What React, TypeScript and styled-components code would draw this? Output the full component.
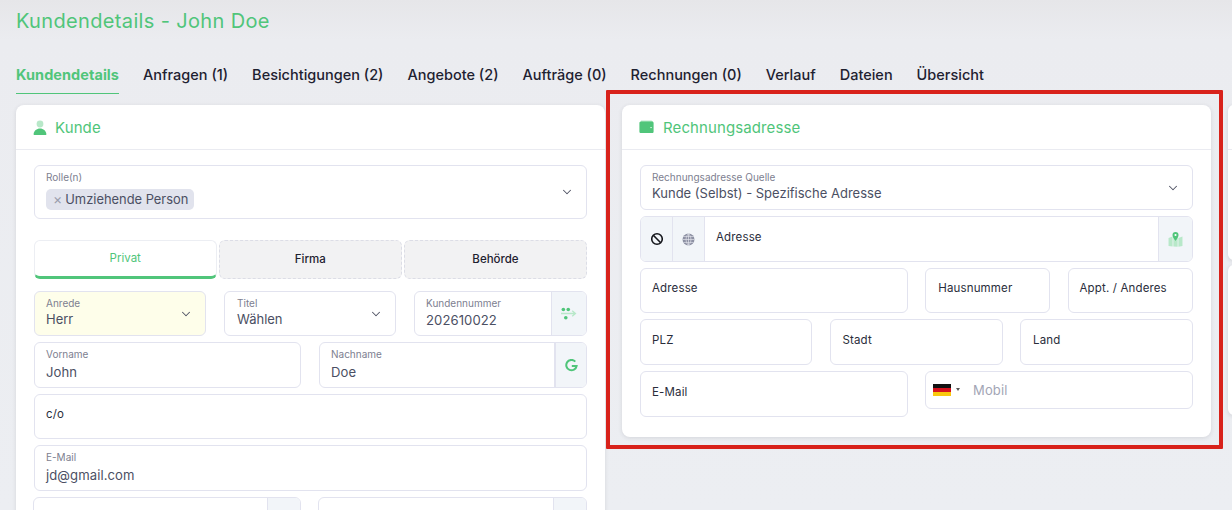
import React from 'react';
import styled, { createGlobalStyle } from 'styled-components';
import { ChevronDown } from 'lucide-react';

const GREEN = '#50c57a';
const BORDER = '#e2e3ef';

const Global = createGlobalStyle`
  html, body { margin: 0; padding: 0; height: 510px; overflow: hidden; }
  body {
    background: linear-gradient(180deg, #e6e6e9 0, #ebecf0 40px, #eceef2 100%);
    font-family: Inter, 'Liberation Sans', sans-serif;
    color: #1e2130;
  }
`;

const Page = styled.div`
  position: relative;
  width: 1232px;
  height: 510px;
  overflow: hidden;
  padding: 9px 0 0 16px;
  box-sizing: border-box;
`;

const Title = styled.h1`
  margin: 0;
  height: 24px;
  line-height: 24px;
  font-size: 20px;
  font-weight: 400;
  letter-spacing: 0.35px;
  color: ${GREEN};
`;

const Tabs = styled.nav`
  display: flex;
  gap: 24px;
  margin-top: 24px;
  height: 37px;
`;

const Tab = styled.div<{ $active?: boolean }>`
  height: 37px;
  box-sizing: border-box;
  padding-top: 9px;
  line-height: 18px;
  font-size: 14.5px;
  font-weight: ${({ $active }) => ($active ? 700 : 500)};
  letter-spacing: ${({ $active }) => ($active ? '0.05px' : '0')};
  color: ${({ $active }) => ($active ? GREEN : '#1e2130')};
  border-bottom: 1px solid ${({ $active }) => ($active ? GREEN : 'transparent')};
`;

const Columns = styled.div`
  display: grid;
  grid-template-columns: 589px 589px;
  gap: 17px;
  margin-top: 11px;
  align-items: start;
`;

const Card = styled.section`
  background: #fff;
  border-radius: 8px;
  box-shadow: 0 1px 4px rgba(40, 42, 60, 0.12);
`;

const CardHeader = styled.header<{ $gap: number }>`
  display: flex;
  align-items: center;
  gap: ${({ $gap }) => $gap}px;
  height: 44px;
  padding: 0 0 0 17px;
  border-bottom: 1px solid #eaebf1;
  font-size: 15px;
  letter-spacing: 0.1px;
  color: ${GREEN};
`;

const CardBody = styled.div<{ $side?: boolean }>`
  display: flex;
  flex-direction: column;
  gap: 6px;
  padding: ${({ $side }) => ($side ? '14.75px 18px 20px' : '14.75px 18px')};
`;

const Row = styled.div<{ $cols: string; $gap: number; $nudge?: boolean }>`
  display: grid;
  grid-template-columns: ${({ $cols }) => $cols};
  column-gap: ${({ $gap }) => $gap}px;
  align-items: start;
  margin-left: ${({ $nudge }) => ($nudge ? '-1px' : '0')};
`;

const Field = styled.div<{ $h?: number; $bg?: string }>`
  position: relative;
  display: flex;
  box-sizing: border-box;
  height: ${({ $h }) => $h ?? 45.5}px;
  border: 1px solid ${BORDER};
  border-radius: 6px;
  background: ${({ $bg }) => $bg ?? '#fff'};
  overflow: hidden;
`;

const FieldBody = styled.div<{ $pad?: number }>`
  flex: 1;
  min-width: 0;
  padding: 5px 0 0 ${({ $pad }) => $pad ?? 11}px;
`;

const Small = styled.div`
  height: 13px;
  line-height: 13px;
  font-size: 10px;
  color: #7d8090;
`;

const Value = styled.div<{ $lift?: number }>`
  height: 20px;
  margin-top: ${({ $lift }) => 1 - ($lift ?? 0)}px;
  line-height: 20px;
  font-size: 13.1px;
  letter-spacing: 0.08px;
  color: #4b4f63;
`;

const SelectValue = styled(Value)`
  font-size: 13px;
  letter-spacing: 0;
`;

const Placeholder = styled.div<{ $y?: number }>`
  padding-top: ${({ $y }) => $y ?? 7}px;
  line-height: 16px;
  font-size: 11.5px;
  letter-spacing: 0.15px;
  color: #2a2d3b;
`;

const Caret = styled(ChevronDown)`
  align-self: center;
  flex: none;
  margin-right: 12px;
  color: #4f5264;
`;

const Addon = styled.div<{ $w: number; $left?: boolean; $thick?: boolean }>`
  flex: none;
  display: flex;
  align-items: center;
  justify-content: center;
  box-sizing: border-box;
  width: ${({ $w }) => $w}px;
  background: #f2f5f9;
  ${({ $left, $thick }) =>
    $left
      ? `border-right: 1px solid ${BORDER};`
      : `border-left: ${$thick ? 2 : 1}px solid ${BORDER};`}
`;

const Chip = styled.div`
  display: inline-flex;
  align-items: center;
  gap: 3px;
  height: 21px;
  margin-top: 5px;
  padding: 0 6px 0 7px;
  border-radius: 5px;
  background: #e1e3ed;
  font-size: 12.9px;
  color: #4b4f63;
`;

const ChipClose = styled.span`
  font-size: 14px;
  line-height: 14px;
  color: #9a9cab;
`;

const TypeTabs = styled.div`
  display: grid;
  grid-template-columns: 182.5px 183px 183px;
  column-gap: 2.25px;
  margin-top: 15px;
  margin-bottom: 6px;
`;

const TypeTab = styled.div<{ $active?: boolean }>`
  display: flex;
  align-items: center;
  justify-content: center;
  box-sizing: border-box;
  height: 39px;
  border-radius: 6px;
  font-size: 11.5px;
  ${({ $active }) =>
    $active
      ? `background:#fff;color:${GREEN};border:1px solid #eceef3;border-bottom:3px solid ${GREEN};padding-bottom:1px;`
      : `background:#f2f2f3;color:#1e2130;font-weight:500;border:1px dashed #dcdde6;`}
`;

const NextCard = styled.div<{ $top: number; $h: number; $line?: boolean }>`
  position: absolute;
  left: 1228px;
  top: ${({ $top }) => $top}px;
  width: 20px;
  height: ${({ $h }) => $h}px;
  background: #fff;
  border-radius: 6px;
  box-shadow: 0 1px 4px rgba(40, 42, 60, 0.14);
  ${({ $line }) => ($line ? 'background: linear-gradient(180deg, #fff 44px, #eaebf1 44px 45px, #fff 45px);' : '')}
`;

const Highlight = styled.div`
  position: absolute;
  left: 606px;
  top: 90px;
  width: 617px;
  height: 359px;
  box-sizing: border-box;
  border: 4px solid #d8221b;
  border-radius: 1px;
  pointer-events: none;
`;

const FlagWrap = styled.div`
  display: flex;
  align-items: center;
  gap: 5px;
  padding-left: 7px;
  width: 40px;
  flex: none;
`;

const Flag = styled.div`
  flex: none;
  width: 18px;
  height: 12px;
  background: linear-gradient(180deg, #111 0 33.3%, #d5121e 33.3% 66.6%, #f9c80e 66.6%);
`;

const FlagCaret = styled.div`
  flex: none;
  width: 0;
  height: 0;
  border-left: 2px solid transparent;
  border-right: 2px solid transparent;
  border-top: 3px solid #555;
`;

const PhoneInput = styled.div`
  align-self: center;
  font-size: 13px;
  letter-spacing: 0.15px;
  color: #a2a5b5;
`;

const PersonIcon = () => (
  <svg width="14" height="15" viewBox="0 0 14 15">
    <circle cx="7" cy="4" r="3.4" fill="#b8e8c9" />
    <path d="M1.5 15c-.6 0-1-.5-.9-1.1C1.1 11 3.6 8.6 7 8.6s5.9 2.4 6.4 5.3c.1.6-.3 1.1-.9 1.1z" fill={GREEN} />
  </svg>
);

const WalletIcon = () => (
  <svg width="15" height="14" viewBox="0 0 15 14">
    <path d="M2 .5h10c.8 0 1.5.6 1.5 1.5H2z" fill="#b8e8c9" />
    <path d="M1.5 1.5H13c1 0 1.6.6 1.6 1.5v8.5c0 1-.6 1.6-1.6 1.6H2c-1 0-1.6-.6-1.6-1.6V2.5z" fill={GREEN} />
    <rect x="11.5" y="7" width="1.1" height="1.1" fill="#fff" />
  </svg>
);

const BlockIcon = () => (
  <svg width="14" height="14" viewBox="0 0 14 14" fill="none" stroke="#15161c" strokeWidth="1.6">
    <circle cx="7" cy="7" r="5.3" />
    <path d="M3.3 3.3l7.4 7.4" />
  </svg>
);

const GlobeIcon = () => (
  <svg width="13" height="13" viewBox="0 0 12 12">
    <circle cx="6" cy="6" r="5.5" fill="#8d90a3" />
    <path d="M6 .5v11M.5 6h11M1.3 3.3h9.4M1.3 8.7h9.4M6 .5C3 3.5 3 8.5 6 11.5M6 .5c3 3 3 8 0 11" fill="none" stroke="#e6e8ef" strokeWidth=".6" />
  </svg>
);

const MapIcon = () => (
  <svg width="15" height="15" viewBox="0 0 14 14">
    <path d="M.5 5.5l3.8-1.4v9.4L.5 13zM5 4.1l4 1.5v8.2l-4-.3zM9.7 5.6l3.8-1.5v8.9l-3.8.8z" fill="#b8e8c9" />
    <path d="M7 0a2.8 2.8 0 0 1 2.8 2.8C9.8 5 7 8.3 7 8.3S4.2 5 4.2 2.8A2.8 2.8 0 0 1 7 0z" fill={GREEN} />
    <circle cx="7" cy="2.8" r="1" fill="#fff" />
  </svg>
);

const FlowIcon = () => (
  <svg width="16" height="13" viewBox="0 0 15 12">
    <circle cx="2.2" cy="2.2" r="1.7" fill={GREEN} />
    <circle cx="6.8" cy="2.2" r="1.7" fill={GREEN} />
    <circle cx="4.5" cy="10" r="1.7" fill={GREEN} />
    <path d="M0 6h13M10.5 3.5L13.5 6l-3 2.5" fill="none" stroke="#b8e8c9" strokeWidth="1.3" />
  </svg>
);

const GoogleIcon = () => (
  <svg width="13" height="13" viewBox="0 0 13 13" fill="none" stroke={GREEN} strokeWidth="2">
    <path d="M10.3 2.6A5.2 5.2 0 1 0 11.6 7H6.8" />
  </svg>
);

const App = () => (
  <Page>
    <Global />
    <Title>Kundendetails - John Doe</Title>
    <Tabs>
      <Tab $active>Kundendetails</Tab>
      <Tab>Anfragen (1)</Tab>
      <Tab>Besichtigungen (2)</Tab>
      <Tab>Angebote (2)</Tab>
      <Tab>Aufträge (0)</Tab>
      <Tab>Rechnungen (0)</Tab>
      <Tab>Verlauf</Tab>
      <Tab>Dateien</Tab>
      <Tab>Übersicht</Tab>
    </Tabs>
    <Columns>
      <Card>
        <CardHeader $gap={8}>
          <PersonIcon />
          Kunde
        </CardHeader>
        <CardBody>
          <Field $h={54}>
            <FieldBody>
              <Small>Rolle(n)</Small>
              <Chip>
                <ChipClose>×</ChipClose>
                Umziehende Person
              </Chip>
            </FieldBody>
            <Caret size={14} strokeWidth={1.75} />
          </Field>
          <TypeTabs>
            <TypeTab $active>Privat</TypeTab>
            <TypeTab>Firma</TypeTab>
            <TypeTab>Behörde</TypeTab>
          </TypeTabs>
          <Row $cols="172px 172px 173px" $gap={18}>
            <Field $bg="#fefeea">
              <FieldBody>
                <Small>Anrede</Small>
                <SelectValue $lift={2}>Herr</SelectValue>
              </FieldBody>
              <Caret size={14} strokeWidth={1.75} />
            </Field>
            <Field>
              <FieldBody $pad={12}>
                <Small>Titel</Small>
                <SelectValue $lift={2}>Wählen</SelectValue>
              </FieldBody>
              <Caret size={14} strokeWidth={1.75} />
            </Field>
            <Field>
              <FieldBody>
                <Small>Kundennummer</Small>
                <Value $lift={1}>202610022</Value>
              </FieldBody>
              <Addon $w={35}>
                <FlowIcon />
              </Addon>
            </Field>
          </Row>
          <Row $cols="267px 268px" $gap={18}>
            <Field>
              <FieldBody>
                <Small>Vorname</Small>
                <Value>John</Value>
              </FieldBody>
            </Field>
            <Field>
              <FieldBody>
                <Small>Nachname</Small>
                <Value>Doe</Value>
              </FieldBody>
              <Addon $w={32} $thick>
                <GoogleIcon />
              </Addon>
            </Field>
          </Row>
          <Field>
            <FieldBody>
              <Placeholder $y={6}>c/o</Placeholder>
            </FieldBody>
          </Field>
          <Field>
            <FieldBody>
              <Small>E-Mail</Small>
              <Value>jd@gmail.com</Value>
            </FieldBody>
          </Field>
          <Row $cols="268px 269px" $gap={17} $nudge>
            <Field>
              <FieldBody />
              <Addon $w={33} />
            </Field>
            <Field>
              <FieldBody />
              <Addon $w={33} />
            </Field>
          </Row>
        </CardBody>
      </Card>
      <Card>
        <CardHeader $gap={9}>
          <WalletIcon />
          Rechnungsadresse
        </CardHeader>
        <CardBody $side>
          <Field>
            <FieldBody>
              <Small>Rechnungsadresse Quelle</Small>
              <SelectValue $lift={2}>Kunde (Selbst) - Spezifische Adresse</SelectValue>
            </FieldBody>
            <Caret size={14} strokeWidth={1.75} />
          </Field>
          <Field>
            <Addon $w={32} $left>
              <BlockIcon />
            </Addon>
            <Addon $w={32} $left>
              <GlobeIcon />
            </Addon>
            <FieldBody>
              <Placeholder $y={7}>Adresse</Placeholder>
            </FieldBody>
            <Addon $w={34}>
              <MapIcon />
            </Addon>
          </Field>
          <Row $cols="268px 125px 125.5px" $gap={17.25}>
            <Field>
              <FieldBody>
                <Placeholder $y={6}>Adresse</Placeholder>
              </FieldBody>
            </Field>
            <Field>
              <FieldBody $pad={12}>
                <Placeholder $y={6}>Hausnummer</Placeholder>
              </FieldBody>
            </Field>
            <Field>
              <FieldBody>
                <Placeholder $y={6}>Appt. / Anderes</Placeholder>
              </FieldBody>
            </Field>
          </Row>
          <Row $cols="172px 173px 173px" $gap={17.5}>
            <Field>
              <FieldBody>
                <Placeholder>PLZ</Placeholder>
              </FieldBody>
            </Field>
            <Field>
              <FieldBody $pad={12}>
                <Placeholder>Stadt</Placeholder>
              </FieldBody>
            </Field>
            <Field>
              <FieldBody $pad={12}>
                <Placeholder>Land</Placeholder>
              </FieldBody>
            </Field>
          </Row>
          <Row $cols="268px 268px" $gap={17}>
            <Field $h={46}>
              <FieldBody>
                <Placeholder>E-Mail</Placeholder>
              </FieldBody>
            </Field>
            <Field $h={38}>
              <FlagWrap>
                <Flag />
                <FlagCaret />
              </FlagWrap>
              <PhoneInput>Mobil</PhoneInput>
            </Field>
          </Row>
        </CardBody>
      </Card>
    </Columns>
    <NextCard $top={105} $h={155} $line />
    <NextCard $top={265} $h={150} />
    <Highlight />
  </Page>
);

export default App;
